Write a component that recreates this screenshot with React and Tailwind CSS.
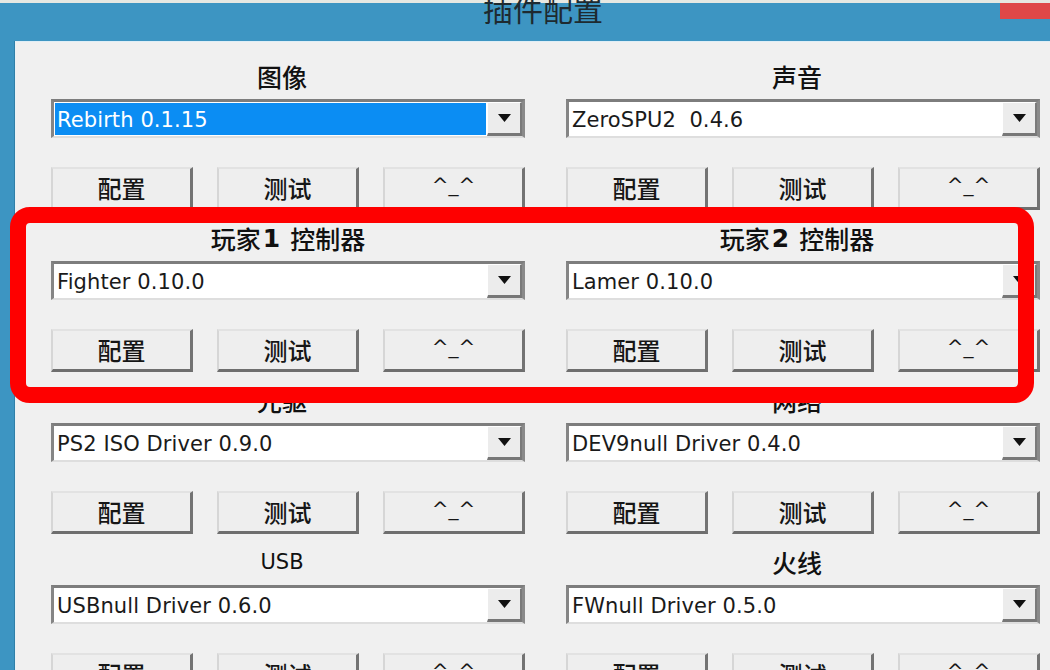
import React from "react";

const CJK = { fontFamily: '"Noto Sans CJK SC", "Noto Sans", sans-serif' };
const LAT = { fontFamily: '"DejaVu Sans", "Noto Sans CJK SC", sans-serif' };

function Combo({ value, selected }) {
  return (
    <div className="h-[39px] flex bg-white border-t-[3px] border-l-[3px] border-r-[3px] border-b-[2px] border-t-[#7d7d7d] border-l-[#858585] border-r-[#8a8a8a] border-b-[#dedede]">
      <div className="flex-1 flex items-center p-[1px] min-w-0">
        <div
          className={
            "h-full w-full flex items-center pl-[2px] pt-[3px] text-[21px] tracking-[0.1px] whitespace-pre " +
            (selected ? "bg-[#0b8df3] text-white" : "text-[#1a1a1a]")
          }
          style={LAT}
        >
          {value}
        </div>
      </div>
      <div className="w-[35px] flex items-center justify-center bg-[#ececec] border-t border-l border-t-white border-l-white border-r-[2px] border-b-[3px] border-r-[#7a7a7a] border-b-[#777]">
        <svg width="13" height="8" viewBox="0 0 13 8">
          <polygon points="0,0 13,0 6.5,8" fill="#111" />
        </svg>
      </div>
    </div>
  );
}

function Btn({ children, latin }) {
  return (
    <div
      className={
        "h-[43px] flex items-center justify-center bg-[#eeeeee] border-t-[2px] border-l-[2px] border-t-[#e2e2e2] border-l-[#d6d6d6] border-r-[3px] border-b-[3px] border-r-[#737373] border-b-[#6e6e6e] text-[#161616] " +
        (latin ? "text-[20px] pb-[6px]" : "text-[24px] font-medium")
      }
      style={latin ? LAT : CJK}
    >
      {children}
    </div>
  );
}

function Panel({ label, value, selected, labelLatin, centered }) {
  return (
    <div className="flex flex-col">
      <div
        className={
          "h-[30px] flex items-center justify-center text-[#111] " +
          (centered ? "" : "pr-[12px] ") +
          (labelLatin ? "text-[21px]" : "text-[25px] font-medium")
        }
        style={labelLatin ? LAT : CJK}
      >
        {label}
      </div>
      <div className="mt-[7px]">
        <Combo value={value} selected={selected} />
      </div>
      <div className="mt-[29px] grid grid-cols-3 gap-x-[24px]">
        <Btn>配置</Btn>
        <Btn>测试</Btn>
        <Btn latin>^_^</Btn>
      </div>
    </div>
  );
}

function PlayerLabel({ n }) {
  return (
    <span className="flex items-center">
      <span>玩家</span>
      <span className="font-bold ml-[2px] mr-[10px]" style={LAT}>{n}</span>
      <span>控制器</span>
    </span>
  );
}

export default function App() {
  const rows = [
    [
      { label: "图像", value: "Rebirth 0.1.15", selected: true },
      { label: "声音", value: "ZeroSPU2  0.4.6" },
    ],
    [
      { label: <PlayerLabel n="1" />, value: "Fighter 0.10.0", centered: true },
      { label: <PlayerLabel n="2" />, value: "Lamer 0.10.0" },
    ],
    [
      { label: "光驱", value: "PS2 ISO Driver 0.9.0" },
      { label: "网络", value: "DEV9null Driver 0.4.0" },
    ],
    [
      { label: "USB", value: "USBnull Driver 0.6.0", labelLatin: true },
      { label: "火线", value: "FWnull Driver 0.5.0" },
    ],
  ];

  return (
    <div className="w-[1050px] h-[670px] overflow-hidden relative bg-[#3d95c2] flex flex-col">
      <div className="h-[3px] bg-[#e6e8e2] flex-none" />
      <div className="h-[38px] flex-none flex justify-center pl-[36px] relative">
        <div className="text-[30px] leading-none -mt-[10px] text-[#1e2a30]" style={CJK}>
          插件配置
        </div>
        <div className="absolute right-0 top-0 w-[50px] h-[16px] bg-[#df4848]" />
      </div>
      <div className="flex-1 flex min-h-0">
        <div className="w-[15px] flex-none border-r border-r-[#2f7fa8]" />
        <div className="flex-1 bg-[#f0f0f0] border-t border-l border-t-[#dfeef6] border-l-[#e8f2f7] pt-[20px] pl-[35px] pr-[10px] flex flex-col gap-y-[14px]">
          {rows.map((r, i) => (
            <div key={i} className="grid grid-cols-2 gap-x-[41px]">
              {r.map((p, j) => (
                <Panel key={j} {...p} />
              ))}
            </div>
          ))}
        </div>
      </div>
      <div className="absolute left-[10px] top-[207px] w-[1024px] h-[196px] border-[16px] border-[#fe0000] rounded-[20px] pointer-events-none" />
    </div>
  );
}
